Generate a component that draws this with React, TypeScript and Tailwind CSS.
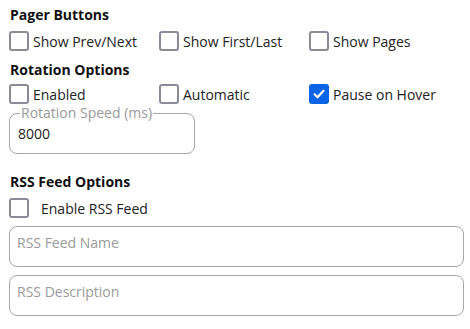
import React, { useState } from 'react';

const font = { fontFamily: '"Open Sans", "Noto Sans", sans-serif' };

function Box({ checked, onClick }: { checked: boolean; onClick: () => void }) {
  return (
    <span
      onClick={onClick}
      className={
        'flex items-center justify-center w-[20px] h-[20px] rounded-[3px] shrink-0 ' +
        (checked ? 'bg-[#0b63e5]' : 'border-2 border-[#8c8a96] bg-white')
      }
    >
      {checked && (
        <svg width="14" height="14" viewBox="0 0 14 14" fill="none">
          <path d="M2.5 7.2l3 3 6-6.4" stroke="white" strokeWidth="2.2" strokeLinecap="round" strokeLinejoin="round" />
        </svg>
      )}
    </span>
  );
}

function Check({ label, checked, onToggle, gap = 'gap-[4px]' }: { label: string; checked: boolean; onToggle: () => void; gap?: string }) {
  return (
    <label className={'flex items-center w-[150px] h-[20px] cursor-pointer ' + gap}>
      <Box checked={checked} onClick={onToggle} />
      <span className="text-[14px] text-[#222]">{label}</span>
    </label>
  );
}

export default function App() {
  const [opts, setOpts] = useState<Record<string, boolean>>({
    prev: false, first: false, pages: false, enabled: false, auto: false, pause: true, rss: false,
  });
  const toggle = (k: string) => setOpts({ ...opts, [k]: !opts[k] });

  return (
    <div className="w-[470px] h-[329px] bg-white pl-[9px] pr-[6px]" style={font}>
      <h3 className="text-[14px] font-bold text-[#111] leading-[20px] pt-[5px] pl-px">Pager Buttons</h3>
      <div className="flex mt-[6px]">
        <Check label="Show Prev/Next" checked={opts.prev} onToggle={() => toggle('prev')} />
        <Check label="Show First/Last" checked={opts.first} onToggle={() => toggle('first')} />
        <Check label="Show Pages" checked={opts.pages} onToggle={() => toggle('pages')} />
      </div>

      <h3 className="text-[14px] font-bold text-[#111] leading-[20px] mt-[9px] pl-px">Rotation Options</h3>
      <div className="flex mt-[4px]">
        <Check label="Enabled" checked={opts.enabled} onToggle={() => toggle('enabled')} />
        <Check label="Automatic" checked={opts.auto} onToggle={() => toggle('auto')} />
        <Check label="Pause on Hover" checked={opts.pause} onToggle={() => toggle('pause')} />
      </div>

      <fieldset className="w-[186px] h-[48px] mt-[2px] border border-[#a6a6a6] rounded-[8px] pl-[8px] pr-[7px] -mb-[7px]">
        <legend className="text-[14px] text-[#9a9a9a] leading-[14px] px-px ml-[2px]">Rotation Speed (ms)</legend>
        <input defaultValue="8000" className="block w-full text-[14px] text-[#222] leading-[18px] outline-none mt-[5px]" />
      </fieldset>

      <h3 className="text-[14px] font-bold text-[#111] leading-[20px] mt-[25px] pl-px">RSS Feed Options</h3>
      <div className="flex mt-[6px]">
        <Check label="Enable RSS Feed" checked={opts.rss} onToggle={() => toggle('rss')} gap="gap-[12px]" />
      </div>

      <div className="mt-[8px] h-[41px] border border-[#a6a6a6] rounded-[8px] px-[7px] pt-[7px]">
        <input placeholder="RSS Feed Name" className="block w-full text-[14px] leading-[18px] text-[#222] placeholder:text-[#9a9a9a] outline-none" />
      </div>
      <div className="mt-[8px] h-[41px] border border-[#a6a6a6] rounded-[8px] px-[7px] pt-[7px]">
        <input placeholder="RSS Description" className="block w-full text-[14px] leading-[18px] text-[#222] placeholder:text-[#9a9a9a] outline-none" />
      </div>
    </div>
  );
}
